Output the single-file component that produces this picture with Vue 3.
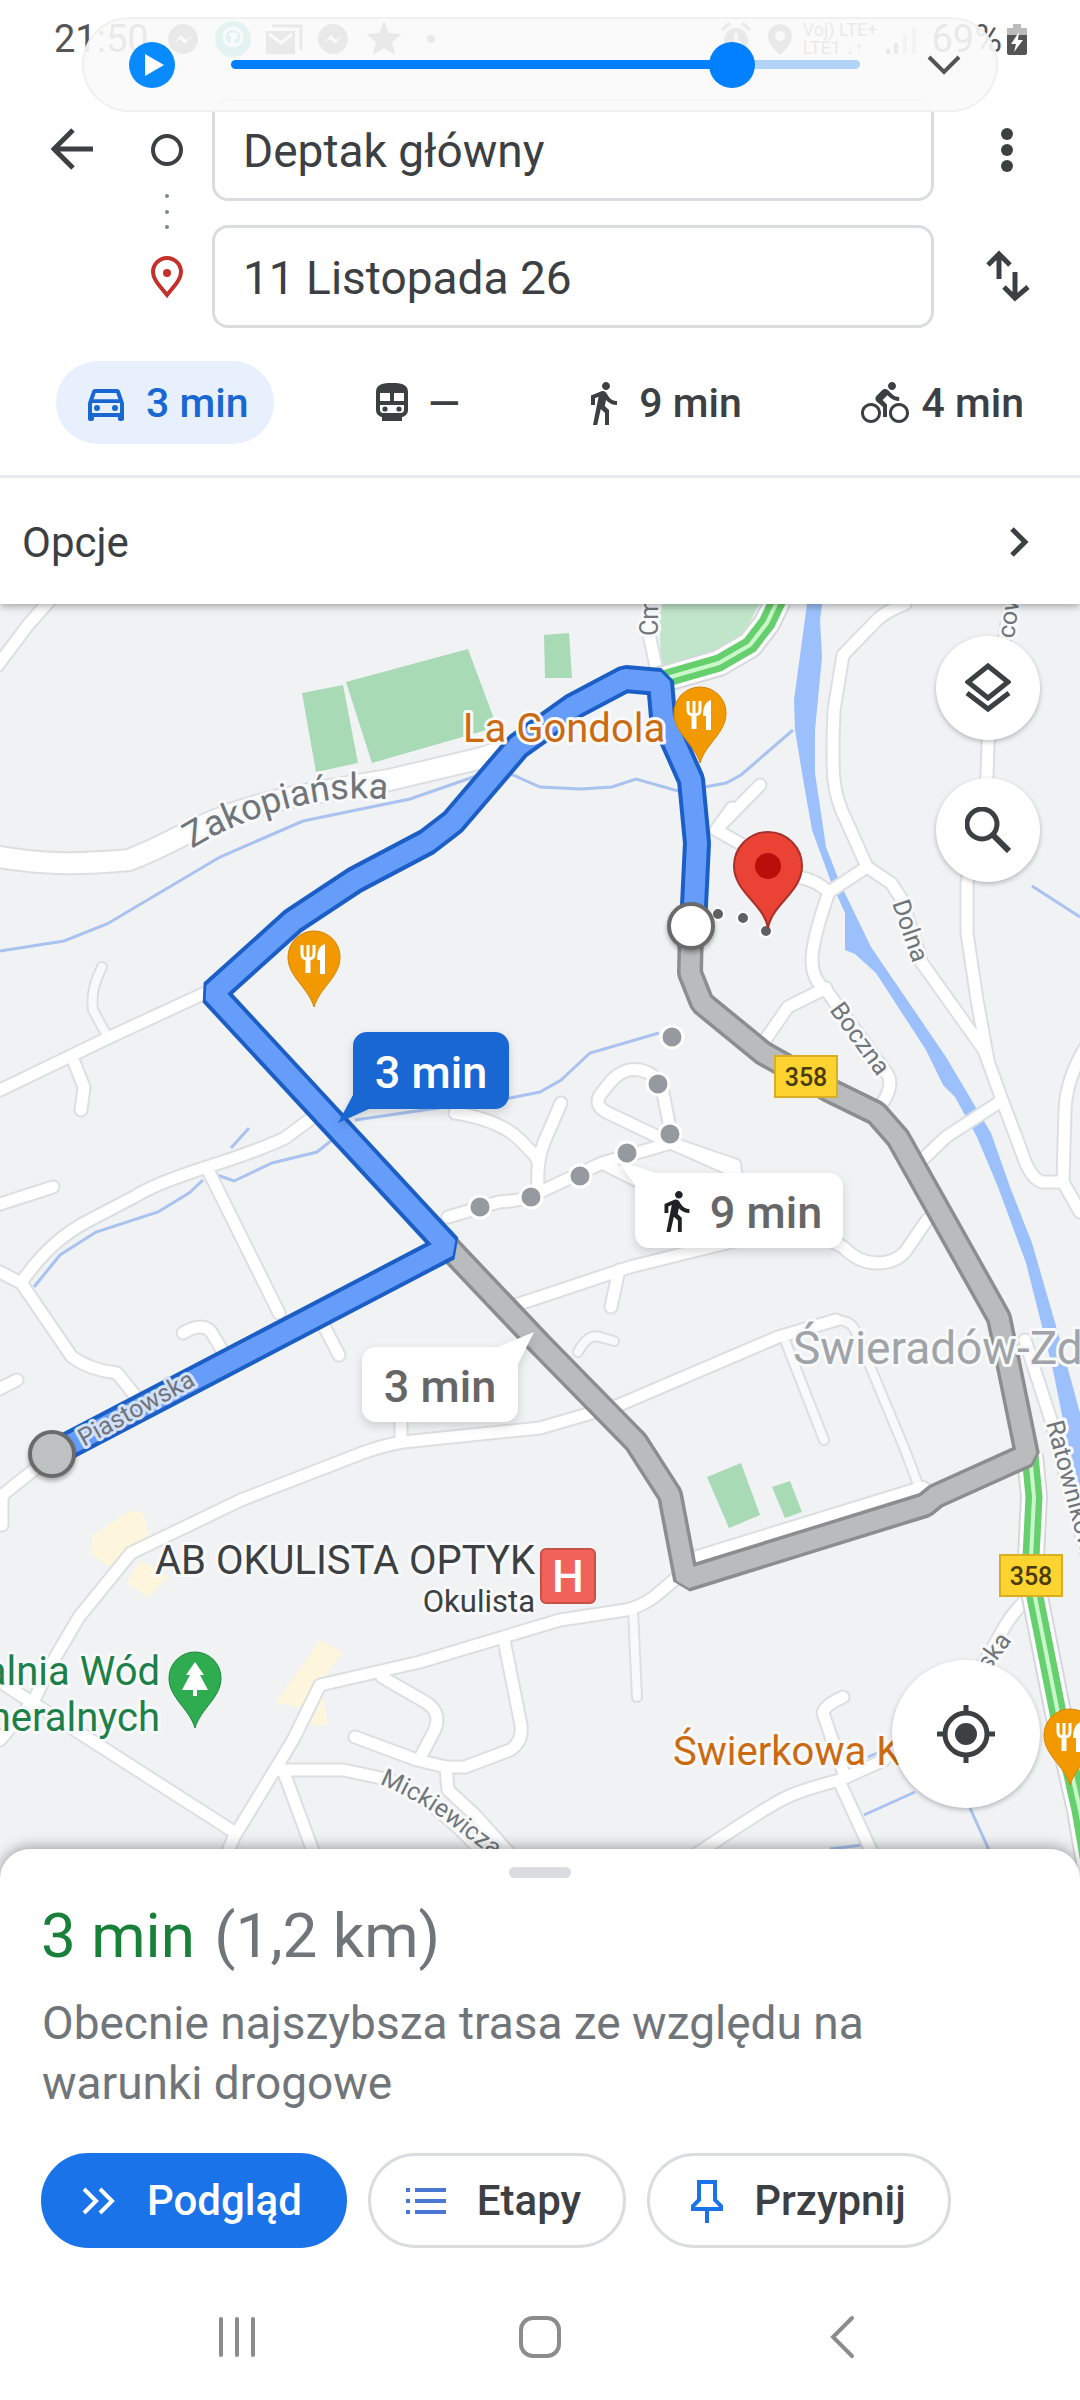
<template>
  <div class="directions-page">
    <header class="top-panel">
      <div class="status-bar">
        <span class="clock">21:50</span>
        <svg class="status-icons" viewBox="0 0 270 40" aria-hidden="true">
          <circle cx="18" cy="20" r="15" fill="#555" />
          <path d="M9 24l7-8 5 5 6-5-7 9-5-5z" fill="#fff" />
          <circle cx="68" cy="20" r="18" fill="#14b8a0" />
          <circle cx="68" cy="18" r="9" fill="none" stroke="#fff" stroke-width="3" />
          <path d="M64 14h8v6h-3v4h3v3h-8v-3h2v-7h-2z" fill="#fff" />
          <path d="M107 7h29v24" fill="none" stroke="#555" stroke-width="3" />
          <path d="M101 12h29v23h-29z" fill="#555" />
          <path d="M104 15l12 9 11-9" fill="none" stroke="#fff" stroke-width="3" />
          <circle cx="168" cy="20" r="15" fill="#555" />
          <path d="M159 24l7-8 5 5 6-5-7 9-5-5z" fill="#fff" />
          <path d="M219 2l5 12 13 1-10 8 3 13-11-7-11 7 3-13-10-8 13-1z" fill="#555" />
          <circle cx="266" cy="20" r="4" fill="#555" />
        </svg>
        <svg class="status-signal" viewBox="0 0 70 40" aria-hidden="true">
          <circle cx="16" cy="21" r="12" fill="#555" />
          <path d="M2 11l8-7M30 11l-8-7" stroke="#555" stroke-width="3" />
          <path d="M16 14v8l5 3" fill="none" stroke="#fff" stroke-width="3" />
          <path d="M60 5a12 12 0 0 0-12 12c0 9 12 19 12 19s12-10 12-19A12 12 0 0 0 60 5zm0 7a5 5 0 1 1 0 10 5 5 0 0 1 0-10z" fill="#555" />
        </svg>
        <span class="network"><span>Voj) LTE+</span><span>LTE1 ↓↑</span></span>
        <svg class="status-bars" viewBox="0 0 32 40" aria-hidden="true">
          <path d="M3 35v-5M11 35V24" stroke="#555" stroke-width="4" />
          <path d="M20 35V15M29 35V8" stroke="#bbb" stroke-width="4" />
        </svg>
        <span class="charge">69%</span>
        <svg class="battery" viewBox="0 0 22 34" aria-hidden="true">
          <path d="M7 2h8v4h6v10H1V6h6z" fill="#bbb" />
          <path d="M1 13h20v18a2 2 0 0 1-2 2H3a2 2 0 0 1-2-2z" fill="#555" />
          <path d="M13 10L5 22h5l-2 8 9-12h-5z" fill="#fff" />
        </svg>
      </div>

      <div class="waypoints">
        <button class="icon-button back" aria-label="Wstecz">
          <svg viewBox="0 0 44 44" width="44" height="44">
            <path d="M42 21H4M22 2L3 21l19 19" fill="none" stroke="#3c4043" stroke-width="5" />
          </svg>
        </button>
        <svg class="marks" viewBox="0 0 34 230" aria-hidden="true">
          <circle cx="17" cy="52" r="14" fill="none" stroke="#3c4043" stroke-width="4" />
          <g fill="#80868b">
            <circle cx="17" cy="98" r="2" />
            <circle cx="17" cy="114" r="2" />
            <circle cx="17" cy="129" r="2" />
          </g>
          <path d="M17 197C9 187 3 181 3 174a14 14 0 0 1 28 0c0 7-6 13-14 23z" fill="none" stroke="#c5302b" stroke-width="4" />
          <circle cx="17" cy="175" r="4" fill="#c5302b" />
        </svg>
        <div class="fields">
          <input v-model="origin" type="text" class="field" aria-label="Punkt początkowy" />
          <input v-model="destination" type="text" class="field" aria-label="Cel podróży" />
        </div>
        <div class="side-actions">
          <button class="icon-button" aria-label="Więcej">
            <svg viewBox="0 0 44 44" width="44" height="44" fill="#3c4043">
              <circle cx="21" cy="6" r="6" />
              <circle cx="21" cy="22" r="6" />
              <circle cx="21" cy="38" r="6" />
            </svg>
          </button>
          <button class="icon-button" aria-label="Zamień miejscami" @click="swap">
            <svg viewBox="0 0 44 54" width="44" height="54" fill="none" stroke="#3c4043" stroke-width="5">
              <path d="M13 29V5M2 15L13 4l11 11M29 22v25M18 37l11 11 13-11" />
            </svg>
          </button>
        </div>
      </div>

      <nav class="modes">
        <button
          v-for="mode in modes"
          :key="mode.id"
          class="mode"
          :class="{ active: mode.id === activeMode }"
          :aria-label="mode.name"
          @click="activeMode = mode.id"
        >
          <svg v-if="mode.id === 'transit'" class="mode-icon" viewBox="0 0 24 24">
            <path fill-rule="evenodd" d="M12 2C7.600 2 4 2.500 4 6.500v9C4 17.400 5.400 18.800 7 19v2h10v-2c1.600-.2 3-1.600 3-3.500v-9C20 2.500 16.400 2 12 2zM6 7h5v4H6zm7 0h5v4h-5zM6 13h12v2.500c0 .8-.7 1.500-1.500 1.500h-9C6.700 17 6 16.300 6 15.500z" />
            <circle cx="8.500" cy="15" r="1.300" />
            <circle cx="15.500" cy="15" r="1.300" />
          </svg>
          <svg v-else class="mode-icon" viewBox="0 0 24 24"><path :d="mode.icon" /></svg>
          <span>{{ mode.label }}</span>
        </button>
      </nav>

      <button class="options">
        <span>Opcje</span>
        <svg viewBox="0 0 24 32" width="24" height="32">
          <path d="M4 3l13 13L4 29" fill="none" stroke="#3c4043" stroke-width="5" />
        </svg>
      </button>

      <!-- Floating media control -->
      <div class="media-pill">
        <button class="icon-button" aria-label="Odtwórz">
          <svg viewBox="0 0 46 46" width="46" height="46">
            <circle cx="23" cy="23" r="23" fill="#0a8aff" />
            <path d="M16 12l19 11-19 11z" fill="#fff" />
          </svg>
        </button>
        <input v-model="progress" type="range" min="0" max="100" class="seek" aria-label="Postęp" />
        <button class="icon-button" aria-label="Zwiń">
          <svg viewBox="0 0 36 24" width="36" height="24">
            <path d="M3 4l15 15L33 4" fill="none" stroke="#555" stroke-width="4" />
          </svg>
        </button>
      </div>
    </header>

    <main class="map">
      <svg class="map-canvas" viewBox="0 604 1080 1276" preserveAspectRatio="xMidYMin slice">
        <rect x="0" y="604" width="1080" height="1276" fill="#f0f2f4" />

        <!-- Built-up areas and greens -->
        <g fill="#fef6dc">
          <path d="M90 1553l3-18 38-25 12 3 9 35-42 20z" />
          <path d="M140 1560l29 17-21 20-21-14z" />
          <path d="M320 1640l23 13-43 54-25-4zM322 1695l6 30-19 1z" />
        </g>
        <path d="M659 604h100l-14 28-30 20-54 16z" fill="#c0e5ca" />
        <g fill="#a8dab5">
          <path v-for="park in parks" :key="park" :d="park" />
        </g>

        <!-- Water -->
        <g class="streams">
          <path v-for="stream in streams" :key="stream" :d="stream" />
        </g>
        <path class="river" :d="river" />

        <!-- Roads: grey casing first, white surface on top -->
        <g class="casing">
          <path v-for="road in thinRoads" :key="road" :d="road" class="thin" />
          <path v-for="road in roads" :key="road" :d="road" />
          <path v-for="road in wideRoads" :key="road" :d="road" class="wide" />
        </g>
        <g class="surface">
          <path v-for="road in thinRoads" :key="road" :d="road" class="thin" />
          <path v-for="road in roads" :key="road" :d="road" />
          <path v-for="road in wideRoads" :key="road" :d="road" class="wide" />
        </g>

        <!-- Traffic -->
        <g fill="none" stroke-linejoin="round">
          <g v-for="line in traffic" :key="line">
            <path :d="line" stroke="#d5d8da" stroke-width="28" />
            <path :d="line" stroke="#fff" stroke-width="24" />
            <path :d="line" stroke="#66d06e" stroke-width="17" />
            <path :d="line" stroke="#c9f7c9" stroke-width="4" />
          </g>
        </g>

        <!-- Routes -->
        <g fill="none" stroke-linejoin="bevel">
          <path :d="altRoute" stroke="#8b8d8e" stroke-width="26" />
          <path :d="altRoute" stroke="#b9bbbc" stroke-width="19" />
          <path :d="mainRoute" stroke="#1b5fc6" stroke-width="28" />
          <path :d="mainRoute" stroke="#669dfb" stroke-width="20" />
        </g>

        <g fill="#96999d" stroke="#fff" stroke-width="3">
          <circle v-for="dot in walkDots" :key="dot.join()" :cx="dot[0]" :cy="dot[1]" r="11" />
        </g>
        <g fill="#5f6062" stroke="#fff" stroke-width="2">
          <circle cx="718" cy="914" r="6" />
          <circle cx="743" cy="918" r="6" />
          <circle cx="766" cy="931" r="6" />
        </g>

        <!-- Street names -->
        <defs>
          <path id="zakopianska" d="M192 849Q235 822 290 808T392 800" />
          <path id="mickiewicza" d="M379 1784Q420 1801 452 1826T520 1876" />
        </defs>
        <text class="label street big"><textPath href="#zakopianska">Zakopiańska</textPath></text>
        <text class="label street"><textPath href="#mickiewicza">Mickiewicza</textPath></text>
        <text
          v-for="street in streets"
          :key="street.name"
          class="label street"
          :class="{ 'on-route': street.onRoute }"
          :transform="`translate(${street.x} ${street.y}) rotate(${street.angle})`"
        >{{ street.name }}</text>

        <!-- Places -->
        <text class="label food" x="463" y="742">La Gondola</text>
        <text class="label food" x="673" y="1765">Świerkowa K</text>
        <text class="label town" x="793" y="1364">Świeradów-Zd</text>
        <text class="label place" x="535" y="1574" text-anchor="end">AB OKULISTA OPTYK</text>
        <text class="label place small" x="535" y="1612" text-anchor="end">Okulista</text>
        <text class="label nature" x="160" y="1685" text-anchor="end">alnia Wód</text>
        <text class="label nature" x="160" y="1731" text-anchor="end">neralnych</text>

        <rect x="541" y="1549" width="54" height="54" rx="5" fill="#f0625a" stroke="#c94f49" stroke-width="2" />
        <text class="hospital" x="568" y="1592" text-anchor="middle">H</text>

        <g v-for="sign in roadSigns" :key="sign.x">
          <rect :x="sign.x" :y="sign.y" width="62" height="41" fill="#fdd32f" stroke="#d8ae22" stroke-width="2" />
          <text class="sign" :x="sign.x + 31" :y="sign.y + 30" text-anchor="middle">358</text>
        </g>

        <g v-for="pin in foodPins" :key="pin.y" :transform="`translate(${pin.x} ${pin.y})`">
          <path d="M0 50C-6 30-26 20-26 0a26 26 0 0 1 52 0c0 20-20 30-26 50z" fill="#f29900" stroke="#d98200" />
          <path d="M-12-12v9q0 5 6 5t6-5v-9M-6-12v27" fill="none" stroke="#fff" stroke-width="3" />
          <path d="M-6 1v15" stroke="#fff" stroke-width="5" />
          <path d="M11 17H6V3H3q0-14 8-16z" fill="#fff" />
        </g>
        <g transform="translate(195 1678)">
          <path d="M0 50C-6 30-26 20-26 0a26 26 0 0 1 52 0c0 20-20 30-26 50z" fill="#2eac4f" stroke="#1d8a3c" />
          <path d="M0-16L9-3H5l8 15H2v6h-4v-6h-11L-5-3h-4z" fill="#fff" />
        </g>
        <g transform="translate(768 866)">
          <path d="M0 62C-4 38-34 26-34 0a34 34 0 0 1 68 0c0 26-30 38-34 62z" fill="#ea4335" stroke="#a8302a" stroke-width="2" />
          <circle r="13" fill="#b80f0b" />
        </g>

        <!-- Route ends -->
        <circle class="stop" cx="691" cy="926" r="22" fill="#fff" />
        <circle class="stop" cx="52" cy="1454" r="22" fill="#bfc0c1" />

        <!-- Time callouts -->
        <g class="callout">
          <path d="M367 1032h128a14 14 0 0 1 14 14v49a14 14 0 0 1-14 14H369l-31 14 15-28v-49a14 14 0 0 1 14-14z" fill="#1967d2" />
          <path d="M376 1347h122l36-15-16 32v44a14 14 0 0 1-14 14H376a14 14 0 0 1-14-14v-47a14 14 0 0 1 14-14z" fill="#fff" />
          <path d="M655 1173h174a14 14 0 0 1 14 14v47a14 14 0 0 1-14 14H649a14 14 0 0 1-14-14v-49l-18-25z" fill="#fff" />
        </g>
        <text class="time light" x="431" y="1088" text-anchor="middle">3 min</text>
        <text class="time" x="440" y="1402" text-anchor="middle">3 min</text>
        <text class="time" x="766" y="1228" text-anchor="middle">9 min</text>
        <svg x="653" y="1188" width="46" height="46" viewBox="0 0 24 24"><path :d="walkIcon" fill="#202124" /></svg>
      </svg>

      <div class="map-tools">
        <button class="round-button" aria-label="Warstwy">
          <svg viewBox="0 0 46 50" width="46" height="50" fill="none" stroke="#3c4043" stroke-width="5">
            <path d="M23 3l20 16-20 16L3 19zM2 30l21 16 21-16" />
          </svg>
        </button>
        <button class="round-button" aria-label="Szukaj">
          <svg viewBox="0 0 46 46" width="46" height="46" fill="none" stroke="#3c4043">
            <circle cx="17" cy="17" r="15" stroke-width="5" />
            <path d="M28 28l16 16" stroke-width="6" />
          </svg>
        </button>
      </div>
      <button class="round-button locate" aria-label="Moja lokalizacja">
        <svg viewBox="0 0 58 58" width="58" height="58" fill="none" stroke="#3c4043" stroke-width="5">
          <circle cx="29" cy="29" r="21" />
          <circle cx="29" cy="29" r="11" fill="#3c4043" stroke="none" />
          <path d="M29 0v9M29 49v9M0 29h9M49 29h9" />
        </svg>
      </button>
    </main>

    <section class="sheet">
      <div class="handle"></div>
      <h1 class="summary"><span class="duration">3 min</span> <span>(1,2 km)</span></h1>
      <p class="note">Obecnie najszybsza trasa ze względu na warunki drogowe</p>
      <div class="actions">
        <button class="action primary">
          <svg viewBox="0 0 36 30" width="36" height="30" fill="none" stroke="#fff" stroke-width="4">
            <path d="M3 3l12 12L3 27M19 3l12 12-12 12" />
          </svg>
          Podgląd
        </button>
        <button class="action steps">
          <svg viewBox="0 0 42 30" width="42" height="30" stroke="#4a76d4" stroke-width="4">
            <path d="M1 4h4M10 4h31M1 15h4M10 15h31M1 26h4M10 26h31" />
          </svg>
          Etapy
        </button>
        <button class="action pin">
          <svg viewBox="0 0 34 44" width="34" height="44" fill="none" stroke="#1a73e8" stroke-width="4">
            <path d="M7 3h20M9 3v18l-6 6v3h28v-3l-6-6V3M17 30v14" />
          </svg>
          Przypnij
        </button>
      </div>
    </section>

    <nav class="system-nav">
      <button class="icon-button" aria-label="Ostatnie">
        <svg viewBox="0 0 44 44" width="44" height="44" stroke="#8c8c8c" stroke-width="4" stroke-linecap="round">
          <path d="M5 4v36M21 4v36M37 4v36" />
        </svg>
      </button>
      <button class="icon-button" aria-label="Ekran główny">
        <svg viewBox="0 0 44 44" width="44" height="44" fill="none" stroke="#8c8c8c" stroke-width="4">
          <rect x="3" y="3" width="38" height="38" rx="12" />
        </svg>
      </button>
      <button class="icon-button" aria-label="Cofnij">
        <svg viewBox="0 0 44 44" width="44" height="44" fill="none" stroke="#8c8c8c" stroke-width="4" stroke-linecap="round">
          <path d="M32 3L13 22l19 19" />
        </svg>
      </button>
    </nav>
  </div>
</template>

<script setup>
import { ref } from 'vue'

const origin = ref('Deptak główny')
const destination = ref('11 Listopada 26')
const progress = ref(82)
const activeMode = ref('car')

const swap = () => {
  const previous = origin.value
  origin.value = destination.value
  destination.value = previous
}

const walkIcon = 'M13.5 5.5c1.1 0 2-.9 2-2s-.9-2-2-2-2 .9-2 2 .9 2 2 2zM9.8 8.9L7 23h2.1l1.8-8 2.1 2v6h2v-7.5l-2.1-2 .6-3C14.8 12 16.8 13 19 13v-2c-1.900 0-3.500-1-4.300-2.400l-1-1.600c-.4-.6-1-1-1.700-1-.3 0-.5.1-.8.1L6 8.300V13h2V9.600l1.800-.7z'

const modes = [
  {
    id: 'car',
    name: 'Samochód',
    label: '3 min',
    icon: 'M18.92 6.01C18.72 5.42 18.16 5 17.5 5h-11c-.66 0-1.21.42-1.42 1.01L3 12v8c0 .55.45 1 1 1h1c.55 0 1-.45 1-1v-1h12v1c0 .55.45 1 1 1h1c.55 0 1-.45 1-1v-8l-2.08-5.99zM6.85 7h10.29l1.08 3.11H5.77L6.85 7zM19 17H5v-5h14v5zM6 14.500a1.500 1.500 0 1 0 3 0 1.500 1.500 0 1 0-3 0zM15 14.500a1.500 1.500 0 1 0 3 0 1.500 1.500 0 1 0-3 0z'
  },
  { id: 'transit', name: 'Transport publiczny', label: '—' },
  { id: 'walk', name: 'Pieszo', label: '9 min', icon: walkIcon },
  {
    id: 'bike',
    name: 'Rower',
    label: '4 min',
    icon: 'M15.5 5.5c1.1 0 2-.9 2-2s-.9-2-2-2-2 .9-2 2 .9 2 2 2zM5 12c-2.8 0-5 2.2-5 5s2.2 5 5 5 5-2.2 5-5-2.2-5-5-5zm0 8.5c-1.9 0-3.5-1.6-3.5-3.5s1.6-3.5 3.5-3.5 3.5 1.6 3.5 3.5-1.6 3.5-3.5 3.5zm5.8-10l2.4-2.4.8.8c1.3 1.3 3 2.1 5.1 2.1V9c-1.5 0-2.7-.6-3.6-1.5l-1.9-1.9c-.5-.4-1-.6-1.6-.6s-1.1.2-1.4.6L7.8 8.4c-.4.4-.6.9-.6 1.4 0 .6.2 1.1.6 1.4L11 14v5h2v-6.2l-2.2-2.3zM19 12c-2.8 0-5 2.2-5 5s2.2 5 5 5 5-2.2 5-5-2.2-5-5-5zm0 8.5c-1.9 0-3.5-1.6-3.5-3.5s1.6-3.5 3.5-3.5 3.5 1.6 3.5 3.5-1.6 3.5-3.5 3.5z'
  }
]

const parks = [
  'M302 693L343 685 358 763 316 772z',
  'M346 682L468 649 497 727 372 763z',
  'M544 635L569 633 572 678 545 678z',
  'M707 1477L741 1463 760 1515 729 1528z',
  'M772 1487L790 1481 802 1512 785 1518z'
]

const streams = [
  'M0 951L64 941 107 924 220 857 303 821 410 799 479 775 513 775 540 787 581 789 612 787 636 779 678 791 705 787 726 783 741 775 793 730',
  'M34 1287L60 1255 96 1232 158 1212 189 1193 203 1180',
  'M217 1175L234 1181 272 1163 317 1152 332 1140',
  'M231 1148L249 1128',
  'M355 1120L424 1110 510 1098 540 1092 561 1080 590 1053 659 1033',
  'M1032 886L1080 917',
  'M864 1815L915 1792M970 1808L989 1850M830 1849L862 1845',
  'M868 1757L884 1750'
]

const river = 'M807 604L794 700 795 730 802 773 812 830 831 882 845 913 845 950 855 954 876 973 926 1050 943 1085 955 1097 977 1137 998 1187 1026 1263 1053 1370 1067 1440 1080 1490V1413L1060 1340 1032 1243 1010 1187 991 1133 946 1057 871 947 840 883 826 847 815 773 815 730 822 657 820 620 822 604z'

const wideRoads = [
  'M0 857Q30 862 58 863T129 860Q150 852 179 837 235 808 293 797T389 780L482 758 520 745',
  'M695 1562L922 1492'
]

const roads = [
  'M-2 665L28 625 50 600',
  'M656 604L647 625 659 680',
  'M905 604Q885 612 877 620L843 655 834 710Q832 760 834 780T846 820L867 867 891 883 902 900 922 963 984 1050 1001 1097 1022 1153Q1030 1178 1042 1182L1063 1182 1080 1212',
  'M867 867L829 892Q812 940 812 960T826 990L888 1075Q894 1087 881 1105',
  'M826 988L788 1007 765 1040',
  'M829 892Q815 880 802 878L716 830 760 785M716 830L732 808',
  'M1010 604L988 743 987 777 967 883V933L977 1000 988 1060',
  'M1085 1048Q1066 1080 1065 1110L1063 1182',
  'M998 1103L946 1137 922 1160',
  'M1025 1340L1050 1417 1085 1550',
  'M927 1220L905 1252Q895 1263 877 1263T843 1247L800 1225',
  'M736 1172L671 1143 606 1112Q594 1105 600 1095L612 1080Q625 1067 640 1070T662 1088L671 1133',
  'M735 1165L671 1143 602 1163 540 1192Q530 1200 499 1202L448 1217M602 1163L640 1182',
  'M561 1103L545 1140Q536 1160 538 1190',
  'M455 1113Q500 1120 520 1140T537 1160',
  'M500 1310L540 1297 630 1267 690 1252 740 1240',
  'M619 1270L611 1307',
  'M0 1497L40 1465M2 1497V1525',
  'M401 1415V1440',
  'M836 1320L778 1337 619 1405 540 1428 403 1442Q385 1445 365 1452L241 1500 131 1553 79 1617 52 1663 34 1700 0 1740',
  'M5 1685L86 1737 234 1832',
  'M680 1575L654 1597Q640 1607 626 1610L560 1620 420 1662 320 1685 293 1740 234 1837 220 1870',
  'M382 1677L427 1703Q444 1715 432 1735L420 1758',
  'M355 1737L417 1760 446 1767H465L510 1750Q523 1742 521 1725L504 1640',
  'M446 1767L448 1790 475 1815 520 1865',
  'M275 1770H344L390 1780Q440 1805 480 1850M283 1770L320 1870',
  'M843 1697Q825 1705 823 1713L845 1777',
  'M884 1760L840 1780Q800 1790 781 1800T680 1865',
  'M840 1783L880 1870',
  'M1026 1600Q1010 1615 1000 1635L980 1670',
  'M0 1090L110 1037 216 988',
  'M74 1062L84 1087 81 1110',
  'M320 1112L285 1138Q260 1150 207 1167T134 1197L90 1220Q50 1240 21 1283L0 1272M22 1284L72 1357Q90 1370 117 1373L137 1398',
  'M207 1168L279 1313M325 1328L339 1355',
  'M183 1333Q205 1320 213 1335L222 1350',
  'M-3 1205L53 1187',
  'M-3 1390L17 1380'
]

const thinRoads = [
  'M106 1034L93 1010Q90 990 102 967',
  'M836 1320Q850 1320 855 1330L905 1450 919 1487',
  'M786 1343L824 1440',
  'M578 1352Q588 1333 600 1337L614 1341',
  'M633 1610L637 1697'
]

const traffic = [
  'M660 680L719 663 750 645 767 623 778 600',
  'M1030 1455L1034 1497 1031 1557 1035 1597 1058 1713 1080 1810 1092 1880'
]

const mainRoute = 'M52 1454L448 1247 213 993 293 921 355 880 427 842 453 822 518 746 574 706 625 679 660 682 663 717 691 780 697 843 693 926'
const altRoute = 'M448 1247L540 1344 636 1442 670 1495 686 1579 925 1505 936 1496 1027 1455 999 1318 898 1138 876 1113 829 1090 763 1053 702 1003 690 973 691 926'

const walkDots = [[480, 1207], [531, 1197], [580, 1176], [627, 1153], [670, 1134], [658, 1084], [672, 1037]]

const foodPins = [{ x: 314, y: 957 }, { x: 700, y: 713 }, { x: 1070, y: 1735 }]

const roadSigns = [{ x: 775, y: 1056 }, { x: 1000, y: 1555 }]

const streets = [
  { name: 'Piastowska', x: 84, y: 1447, angle: -29, onRoute: true },
  { name: 'Dolna', x: 892, y: 903, angle: 71 },
  { name: 'Boczna', x: 829, y: 1010, angle: 54 },
  { name: 'Ratowników', x: 1046, y: 1423, angle: 75 },
  { name: 'Cm', x: 658, y: 636, angle: -90 },
  { name: 'cow', x: 1014, y: 639, angle: -82 },
  { name: 'ska', x: 989, y: 1672, angle: -54 }
]
</script>

<style>
body {
  background: #fff;
}
</style>

<style scoped>
.directions-page {
  display: flex;
  flex-direction: column;
  min-height: 100vh;
  overflow: hidden;
  background: #fff;
  color: #3c4043;
  font-family: Roboto, "Noto Sans", sans-serif;
}

button,
input {
  font-family: inherit;
  color: inherit;
}

button {
  border: none;
  background: none;
  padding: 0;
  cursor: pointer;
}

svg {
  display: block;
  flex: none;
}

.icon-button {
  display: flex;
  align-items: center;
  justify-content: center;
}

.top-panel {
  position: relative;
  z-index: 2;
  background: #fff;
  box-shadow: 0 2px 8px rgba(0, 0, 0, 0.35);
}

.status-bar {
  display: flex;
  align-items: center;
  height: 78px;
  padding: 0 52px 0 54px;
  color: #555;
  font-size: 38px;
}

.status-icons {
  width: 270px;
  height: 40px;
  margin-left: 16px;
}

.status-signal {
  width: 76px;
  height: 40px;
  margin-left: auto;
  overflow: visible;
}

.network {
  display: flex;
  flex-direction: column;
  margin-left: 10px;
  font-size: 18px;
  line-height: 18px;
}

.status-bars {
  width: 32px;
  height: 40px;
  margin: 0 14px 0 8px;
}

.battery {
  width: 22px;
  height: 34px;
  margin-left: 4px;
}

.media-pill {
  position: absolute;
  top: 17px;
  left: 82px;
  right: 82px;
  height: 95px;
  box-sizing: border-box;
  display: flex;
  align-items: center;
  padding: 0 34px 0 45px;
  border: 2px solid rgba(238, 238, 238, 0.8);
  border-radius: 48px;
  background: rgba(250, 250, 250, 0.9);
}

.seek {
  flex: 1;
  height: 46px;
  margin: 0 66px 0 56px;
  appearance: none;
  background: none;
}

.seek::-webkit-slider-runnable-track {
  height: 9px;
  border-radius: 5px;
  background: linear-gradient(to right, #0080ff 80%, #b0d3f6 80%);
}

.seek::-webkit-slider-thumb {
  appearance: none;
  width: 46px;
  height: 46px;
  margin-top: -18px;
  border-radius: 50%;
  background: #0080ff;
}

.waypoints {
  display: flex;
  align-items: flex-start;
  padding: 20px 50px 0 51px;
}

.back {
  height: 103px;
}

.marks {
  width: 34px;
  height: 230px;
  margin: 0 28px 0 55px;
}

.fields {
  flex: 1;
  min-width: 0;
  display: flex;
  flex-direction: column;
  gap: 24px;
}

.field {
  width: 100%;
  height: 103px;
  box-sizing: border-box;
  padding: 2px 28px 0;
  border: 3px solid #dadce0;
  border-radius: 16px;
  background: #fff;
  font-size: 46px;
}

.side-actions {
  display: flex;
  flex-direction: column;
  gap: 24px;
  margin-left: 52px;
}

.side-actions .icon-button {
  height: 103px;
}

.modes {
  display: flex;
  justify-content: space-between;
  padding: 33px 30px 31px 56px;
}

.mode {
  display: flex;
  align-items: center;
  gap: 12px;
  height: 83px;
  padding: 0 26px;
  border-radius: 42px;
  font-size: 41px;
  font-weight: 500;
}

.mode.active {
  gap: 16px;
  background: #e8f0fe;
  color: #1967d2;
}

.mode-icon {
  width: 48px;
  height: 48px;
  fill: currentColor;
}

.options {
  display: flex;
  align-items: center;
  justify-content: space-between;
  width: 100%;
  height: 129px;
  padding: 2px 48px 0 22px;
  border-top: 3px solid #e8eaed;
  font-size: 42px;
}

.map {
  position: relative;
  flex: 1;
  min-height: 1276px;
}

.map-canvas {
  position: absolute;
  inset: 0;
  width: 100%;
  height: 100%;
}

.streams {
  fill: none;
  stroke: #a9c2f0;
  stroke-width: 3;
}

.river {
  fill: #9bc0fb;
}

.casing,
.surface {
  fill: none;
  stroke-linecap: round;
  stroke-linejoin: round;
}

.casing {
  stroke: #dcdfe1;
  stroke-width: 15;
}

.surface {
  stroke: #fff;
  stroke-width: 11;
}

.casing .thin {
  stroke-width: 12;
}

.surface .thin {
  stroke: #f8f9fa;
  stroke-width: 8;
}

.casing .wide {
  stroke-width: 24;
}

.surface .wide {
  stroke-width: 20;
}

.label {
  paint-order: stroke;
  stroke: #f7f9fa;
  stroke-width: 6px;
  stroke-linejoin: round;
}

.street {
  fill: #70757a;
  font-size: 25px;
}

.street.big {
  font-size: 36px;
}

.street.on-route {
  stroke: #d3e1fa;
}

.food {
  fill: #cc6a12;
  font-size: 40px;
}

.town {
  fill: #a0a4a8;
  font-size: 46px;
}

.place {
  fill: #3c4043;
  font-size: 40px;
}

.place.small {
  font-size: 31px;
}

.nature {
  fill: #1e8049;
  font-size: 40px;
}

.hospital {
  fill: #fff;
  font-size: 45px;
  font-weight: 500;
}

.sign {
  fill: #4a3b0a;
  font-size: 25px;
  font-weight: 500;
}

.time {
  fill: #666;
  font-size: 45px;
  font-weight: 500;
}

.time.light {
  fill: #fff;
}

.stop {
  stroke: #6a6a6a;
  stroke-width: 4;
  filter: drop-shadow(0 3px 2px rgba(0, 0, 0, 0.3));
}

.callout {
  filter: drop-shadow(0 4px 5px rgba(0, 0, 0, 0.15));
}

.map-tools {
  position: absolute;
  top: 32px;
  right: 40px;
  display: flex;
  flex-direction: column;
  gap: 38px;
}

.round-button {
  display: flex;
  align-items: center;
  justify-content: center;
  width: 104px;
  height: 104px;
  border-radius: 50%;
  background: #fff;
  box-shadow: 0 2px 5px rgba(0, 0, 0, 0.25);
}

.locate {
  position: absolute;
  right: 40px;
  bottom: 72px;
  width: 148px;
  height: 148px;
}

.sheet {
  position: relative;
  z-index: 1;
  margin-top: -31px;
  padding: 18px 41px 26px;
  border-radius: 30px 30px 0 0;
  background: #fff;
  box-shadow: 0 -2px 14px rgba(0, 0, 0, 0.35);
}

.handle {
  width: 62px;
  height: 11px;
  margin: 0 auto;
  border-radius: 6px;
  background: #dadce0;
}

.summary {
  margin: 22px 0 0;
  color: #70757a;
  font-size: 62px;
  font-weight: 400;
  line-height: 72px;
}

.duration {
  margin-right: 4px;
  color: #188038;
}

.note {
  margin: 21px 0 0;
  padding: 0 120px 0 1px;
  color: #70757a;
  font-size: 46px;
  line-height: 60px;
}

.actions {
  display: flex;
  gap: 21px;
  margin-top: 40px;
}

.action {
  display: flex;
  align-items: center;
  gap: 30px;
  height: 95px;
  box-sizing: border-box;
  padding: 0 40px;
  border: 3px solid #dadce0;
  border-radius: 48px;
  font-size: 42px;
  font-weight: 500;
}

.primary {
  padding: 0 42px 0 37px;
  border-color: #1a73e8;
  background: #1a73e8;
  color: #fff;
}

.steps {
  padding: 0 42px 0 34px;
}

.pin {
  padding: 0 42px 0 40px;
}

.system-nav {
  position: relative;
  z-index: 2;
  display: flex;
  justify-content: space-between;
  align-items: center;
  height: 126px;
  padding: 0 216px;
  background: #fff;
}
</style>
